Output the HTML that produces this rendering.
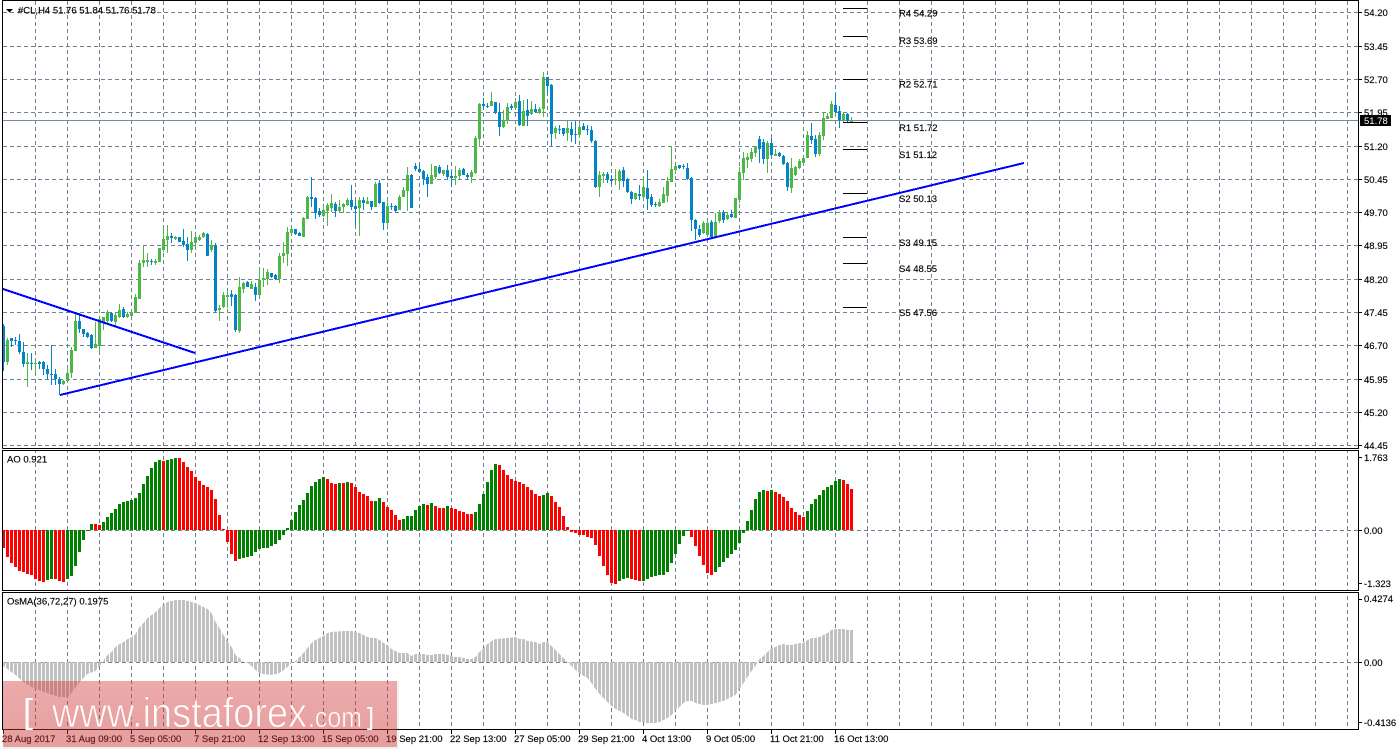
<!DOCTYPE html>
<html><head><meta charset="utf-8"><title>#CL,H4</title>
<style>
html,body{margin:0;padding:0;background:#fff;width:1398px;height:750px;overflow:hidden}
svg{display:block}
text{font-family:"Liberation Sans",sans-serif;font-size:9.5px;fill:#000;stroke:#000;stroke-width:.15px}
</style></head><body>
<svg width="1398" height="750" viewBox="0 0 1398 750" xmlns="http://www.w3.org/2000/svg">
<defs>
<pattern id="st" x="2" y="0" width="4" height="20" patternUnits="userSpaceOnUse"><rect width="3" height="20" fill="#c0c0c0"/></pattern>
<linearGradient id="wm" x1="0" y1="0" x2="0" y2="1"><stop offset="0" stop-color="#d53a3a" stop-opacity=".43"/><stop offset="1" stop-color="#c83030" stop-opacity=".47"/></linearGradient>
</defs>
<rect width="1398" height="750" fill="#fff"/>
<!-- vertical grid -->
<path fill="none" stroke="#708090" stroke-dasharray="4 3" d="M35.5 1V729M67.5 1V729M99.5 1V729M131.5 1V729M163.5 1V729M195.5 1V729M227.5 1V729M259.5 1V729M291.5 1V729M323.5 1V729M355.5 1V729M387.5 1V729M419.5 1V729M451.5 1V729M483.5 1V729M515.5 1V729M547.5 1V729M579.5 1V729M611.5 1V729M643.5 1V729M675.5 1V729M707.5 1V729M739.5 1V729M771.5 1V729M803.5 1V729M835.5 1V729M867.5 1V729M899.5 1V729M931.5 1V729M963.5 1V729M995.5 1V729M1027.5 1V729M1059.5 1V729M1091.5 1V729M1123.5 1V729M1155.5 1V729M1187.5 1V729M1219.5 1V729M1251.5 1V729M1283.5 1V729M1315.5 1V729M1347.5 1V729"/>
<rect x="3" y="449" width="1355" height="1" fill="#fff"/><rect x="3" y="591" width="1355" height="1" fill="#fff"/>
<!-- horizontal grid -->
<path fill="none" stroke="#708090" stroke-dasharray="4 3" d="M3 12.5H1358M3 46.5H1358M3 79.5H1358M3 112.5H1358M3 146.5H1358M3 179.5H1358M3 212.5H1358M3 245.5H1358M3 279.5H1358M3 312.5H1358M3 345.5H1358M3 379.5H1358M3 412.5H1358M3 445.5H1358M3 530.5H1358M3 662.5H1358"/>
<!-- AO -->
<path fill="none" stroke="#ff0000" stroke-width="3" d="M3.5 530V548M7.5 530V557M11.5 530V563M15.5 530V567M19.5 530V571M23.5 530V572M27.5 530V574M31.5 530V575M35.5 530V579M39.5 530V581M43.5 530V582M55.5 530V579M59.5 530V581M63.5 530V582M95.5 530V524M99.5 530V525M163.5 530V461M179.5 530V458M183.5 530V462M187.5 530V467M191.5 530V471M195.5 530V477M199.5 530V481M203.5 530V485M207.5 530V487M211.5 530V490M215.5 530V499M219.5 530V515M223.5 530V529M227.5 530V542M231.5 530V554M235.5 530V561M327.5 530V479M331.5 530V483M335.5 530V484M343.5 530V483M351.5 530V483M355.5 530V487M359.5 530V492M363.5 530V494M367.5 530V496M371.5 530V501M383.5 530V502M387.5 530V507M391.5 530V510M395.5 530V515M399.5 530V520M427.5 530V505M435.5 530V506M439.5 530V508M443.5 530V508M451.5 530V508M455.5 530V509M459.5 530V511M463.5 530V512M467.5 530V514M471.5 530V514M499.5 530V465M503.5 530V470M507.5 530V475M511.5 530V479M515.5 530V481M519.5 530V482M523.5 530V484M527.5 530V487M531.5 530V490M535.5 530V494M539.5 530V496M551.5 530V496M555.5 530V502M559.5 530V507M563.5 530V516M567.5 530V527M571.5 530V532M575.5 530V533M579.5 530V535M583.5 530V535M587.5 530V537M591.5 530V538M595.5 530V545M599.5 530V556M603.5 530V566M607.5 530V575M611.5 530V583M615.5 530V584M631.5 530V579M635.5 530V580M639.5 530V581M691.5 530V537M695.5 530V546M699.5 530V556M703.5 530V565M707.5 530V573M711.5 530V575M767.5 530V491M775.5 530V492M779.5 530V494M783.5 530V497M787.5 530V501M791.5 530V508M795.5 530V512M799.5 530V515M803.5 530V517M843.5 530V480M847.5 530V484M851.5 530V489"/>
<path fill="none" stroke="#008000" stroke-width="3" d="M47.5 530V580M51.5 530V579M67.5 530V579M71.5 530V576M75.5 530V566M79.5 530V552M83.5 530V540M87.5 530V531M91.5 530V524M103.5 530V522M107.5 530V517M111.5 530V513M115.5 530V509M119.5 530V504M123.5 530V502M127.5 530V501M131.5 530V500M135.5 530V498M139.5 530V493M143.5 530V484M147.5 530V476M151.5 530V468M155.5 530V462M159.5 530V460M167.5 530V460M171.5 530V459M175.5 530V458M239.5 530V559M243.5 530V558M247.5 530V557M251.5 530V556M255.5 530V552M259.5 530V549M263.5 530V548M267.5 530V548M271.5 530V546M275.5 530V544M279.5 530V540M283.5 530V535M287.5 530V528M291.5 530V520M295.5 530V512M299.5 530V505M303.5 530V500M307.5 530V493M311.5 530V486M315.5 530V482M319.5 530V479M323.5 530V477M339.5 530V483M347.5 530V482M375.5 530V501M379.5 530V498M403.5 530V519M407.5 530V516M411.5 530V516M415.5 530V510M419.5 530V506M423.5 530V504M431.5 530V503M447.5 530V506M475.5 530V512M479.5 530V504M483.5 530V494M487.5 530V482M491.5 530V470M495.5 530V464M543.5 530V495M547.5 530V493M619.5 530V581M623.5 530V579M627.5 530V578M643.5 530V581M647.5 530V579M651.5 530V577M655.5 530V576M659.5 530V575M663.5 530V575M667.5 530V572M671.5 530V563M675.5 530V554M679.5 530V544M683.5 530V536M687.5 530V531M715.5 530V572M719.5 530V567M723.5 530V562M727.5 530V558M731.5 530V554M735.5 530V550M739.5 530V543M743.5 530V533M747.5 530V521M751.5 530V510M755.5 530V499M759.5 530V492M763.5 530V490M771.5 530V490M807.5 530V511M811.5 530V504M815.5 530V499M819.5 530V495M823.5 530V490M827.5 530V487M831.5 530V485M835.5 530V481M839.5 530V479"/>
<!-- OsMA -->
<path fill="url(#st)" d="M2 662L3.5 666L11.5 672L15.5 675L23.5 682L31.5 687L43.5 692L59.5 697L67.5 697L71.5 693L79.5 682L87.5 674L95.5 671L99.5 666L103.5 662L103.5 660L107.5 655L111.5 652L115.5 647L119.5 644L123.5 642L127.5 639L131.5 637L135.5 634L139.5 627L143.5 623L147.5 618L151.5 615L155.5 612L159.5 608L163.5 605L167.5 602L171.5 601L175.5 600L183.5 600L187.5 601L191.5 602L195.5 603L199.5 605L203.5 607L207.5 609L211.5 613L215.5 622L219.5 628L223.5 635L227.5 641L231.5 647L235.5 655L239.5 658L243.5 662L247.5 663L251.5 666L255.5 670L259.5 673L263.5 674L271.5 675L279.5 673L283.5 670L287.5 667L291.5 663L295.5 661L299.5 657L303.5 653L307.5 648L311.5 643L315.5 640L319.5 638L323.5 636L327.5 633L331.5 632L343.5 631L351.5 631L355.5 632L359.5 633L363.5 635L367.5 637L371.5 638L375.5 638L379.5 640L383.5 643L387.5 645L391.5 649L395.5 651L399.5 653L407.5 653L411.5 656L415.5 654L423.5 654L427.5 655L431.5 655L435.5 654L443.5 654L447.5 655L451.5 656L455.5 657L459.5 657L463.5 658L467.5 659L471.5 659L475.5 657L479.5 652L483.5 648L487.5 644L491.5 641L495.5 639L507.5 638L515.5 637L519.5 639L523.5 639L527.5 641L535.5 642L539.5 644L543.5 642L547.5 642L551.5 646L555.5 650L559.5 654L563.5 658L567.5 662L571.5 666L575.5 670L579.5 673L583.5 676L587.5 678L591.5 683L595.5 689L599.5 694L603.5 698L607.5 702L611.5 706L615.5 709L619.5 711L623.5 713L627.5 716L631.5 719L635.5 720L639.5 722L647.5 723L655.5 723L659.5 722L663.5 720L667.5 718L671.5 715L675.5 710L679.5 707L683.5 703L687.5 701L691.5 701L695.5 703L699.5 704L703.5 705L707.5 705L711.5 704L715.5 703L719.5 702L723.5 701L727.5 699L731.5 697L735.5 695L739.5 689L743.5 683L747.5 677L751.5 671L755.5 666L759.5 659L763.5 656L767.5 652L771.5 648L775.5 647L779.5 645L783.5 644L787.5 645L791.5 645L795.5 644L799.5 643L803.5 643L807.5 640L811.5 638L815.5 638L819.5 637L823.5 635L827.5 633L831.5 630L835.5 629L843.5 629L847.5 630L853 630L853 662Z"/>
<!-- bid line -->
<rect x="3" y="120" width="1355" height="1" fill="#778899"/>
<!-- candles -->
<path fill="none" stroke="#0484c6" stroke-width="1" d="M3.5 324V371M11.5 338V347M15.5 337V345M19.5 334V354M23.5 342V367M31.5 353V370M39.5 361V369M43.5 361V375M47.5 365V380M51.5 345V385M55.5 369V385M59.5 377V395M79.5 313V333M83.5 329V337M87.5 332V338M91.5 334V349M111.5 312V322M123.5 307V318M151.5 259V265M171.5 233V243M179.5 237V242M183.5 229V247M187.5 237V261M207.5 233V256M215.5 243V313M231.5 290V306M235.5 294V332M247.5 281V287M255.5 283V301M271.5 273V278M275.5 274V280M295.5 229V235M299.5 232V236M311.5 177V207M315.5 197V219M319.5 208V217M335.5 202V217M351.5 185V210M355.5 200V225M363.5 197V210M371.5 201V210M379.5 180V204M383.5 202V230M391.5 203V210M395.5 205V213M411.5 174V208M415.5 163V171M419.5 164V173M423.5 170V185M427.5 174V197M439.5 165V174M447.5 165V179M451.5 171V187M463.5 168V175M467.5 173V180M483.5 98V108M487.5 103V108M495.5 102V114M499.5 103V136M511.5 104V110M519.5 95V126M527.5 99V126M535.5 104V113M547.5 77V94M551.5 84V146M559.5 125V134M563.5 128V136M571.5 122V142M575.5 121V144M583.5 123V130M587.5 125V135M591.5 126V143M595.5 140V188M607.5 172V183M611.5 175V184M623.5 167V187M627.5 178V193M631.5 191V204M639.5 185V200M647.5 170V210M651.5 194V207M655.5 202V207M679.5 165V169M683.5 164V169M687.5 163V180M691.5 177V231M695.5 219V240M699.5 225V237M711.5 220V238M723.5 210V223M731.5 210V218M759.5 136V163M763.5 139V164M771.5 138V156M779.5 152V157M783.5 155V165M787.5 162V191M811.5 123V144M815.5 135V157M835.5 93V113M839.5 106V128M847.5 113V122"/>
<path fill="none" stroke="#0484c6" stroke-width="3" d="M3.5 326V362M11.5 338V341M15.5 340V341M19.5 341V352M23.5 352V364M31.5 363V364M39.5 362V364M43.5 362V369M47.5 369V374M51.5 374V375M55.5 374V379M59.5 379V384M79.5 321V329M83.5 329V334M87.5 333V337M91.5 335V348M111.5 313V321M123.5 309V317M151.5 261V262M171.5 236V238M179.5 237V242M183.5 241V245M187.5 244V250M207.5 234V256M215.5 245V311M231.5 294V297M235.5 295V330M247.5 282V287M255.5 287V295M271.5 273V277M275.5 275V279M295.5 229V234M299.5 233V236M311.5 197V199M315.5 198V213M319.5 211V215M335.5 204V211M351.5 200V207M355.5 206V209M363.5 200V203M371.5 201V207M379.5 183V203M383.5 202V223M391.5 206V207M395.5 206V211M411.5 175V208M415.5 166V169M419.5 169V172M423.5 171V179M427.5 177V184M439.5 167V173M447.5 170V177M451.5 176V178M463.5 169V175M467.5 175V177M483.5 104V106M487.5 106V107M495.5 102V113M499.5 112V127M511.5 106V108M519.5 101V125M527.5 110V116M535.5 109V112M547.5 77V86M551.5 85V134M559.5 129V130M563.5 128V134M571.5 129V135M575.5 134V135M583.5 126V130M587.5 129V130M591.5 130V141M595.5 141V187M607.5 174V179M611.5 179V181M623.5 170V181M627.5 179V192M631.5 192V199M639.5 194V196M647.5 188V199M651.5 197V205M655.5 204V205M679.5 165V168M683.5 166V167M687.5 168V179M691.5 178V220M695.5 220V229M699.5 229V235M711.5 222V237M723.5 212V220M731.5 214V217M759.5 139V149M763.5 142V159M771.5 143V155M779.5 153V156M783.5 156V164M787.5 163V187M811.5 136V140M815.5 139V154M835.5 105V112M839.5 111V120M847.5 114V121"/>
<path fill="none" stroke="#4db848" stroke-width="1" d="M7.5 338V365M27.5 353V387M35.5 358V372M63.5 380V385M67.5 368V383M71.5 347V378M75.5 314V351M95.5 322V348M99.5 318V352M103.5 317V330M107.5 310V325M115.5 313V326M119.5 304V318M127.5 312V318M131.5 312V317M135.5 294V313M139.5 260V299M143.5 245V267M147.5 253V267M155.5 259V265M159.5 248V262M163.5 229V252M167.5 225V253M175.5 236V240M191.5 231V253M195.5 236V245M199.5 235V241M203.5 232V238M211.5 240V252M219.5 305V321M223.5 292V308M227.5 291V308M239.5 277V333M243.5 282V293M251.5 281V289M259.5 267V295M263.5 268V287M267.5 269V285M279.5 253V283M283.5 242V263M287.5 227V266M291.5 227V234M303.5 217V237M307.5 196V219M323.5 206V217M327.5 203V226M331.5 194V212M339.5 200V212M343.5 203V213M347.5 198V206M359.5 197V236M367.5 197V204M375.5 182V207M387.5 200V228M399.5 195V210M403.5 187V197M407.5 167V211M431.5 164V184M435.5 166V179M443.5 170V176M455.5 166V185M459.5 168V180M471.5 170V183M475.5 136V174M479.5 103V147M491.5 92V106M503.5 110V128M507.5 103V124M515.5 98V108M523.5 100V126M531.5 101V115M539.5 107V114M543.5 72V117M555.5 126V139M567.5 121V141M579.5 122V138M599.5 171V197M603.5 172V183M615.5 169V185M619.5 169V190M635.5 193V200M643.5 176V200M659.5 199V207M663.5 187V203M667.5 177V202M671.5 146V182M675.5 166V174M703.5 221V234M707.5 220V237M715.5 213V238M719.5 210V223M727.5 212V220M735.5 198V218M739.5 167V203M743.5 152V180M747.5 153V168M751.5 148V162M755.5 146V157M767.5 141V173M775.5 149V156M791.5 158V193M795.5 166V176M799.5 159V169M803.5 157V164M807.5 131V158M819.5 132V156M823.5 112V140M827.5 113V119M831.5 101V118M843.5 113V122M851.5 117V122"/>
<path fill="none" stroke="#4db848" stroke-width="3" d="M7.5 340V362M27.5 362V364M35.5 363V364M63.5 381V384M67.5 373V381M71.5 350V373M75.5 321V351M95.5 344V348M99.5 319V346M103.5 317V322M107.5 312V321M115.5 315V322M119.5 310V317M127.5 314V317M131.5 312V316M135.5 297V313M139.5 263V299M143.5 260V263M147.5 260V262M155.5 261V263M159.5 248V262M163.5 239V250M167.5 236V240M175.5 237V239M191.5 242V250M195.5 237V243M199.5 237V240M203.5 233V237M211.5 245V250M219.5 308V310M223.5 295V307M227.5 295V297M239.5 287V331M243.5 283V289M251.5 284V289M259.5 280V295M263.5 278V280M267.5 272V279M279.5 256V279M283.5 253V256M287.5 232V254M291.5 229V233M303.5 218V237M307.5 197V219M323.5 210V216M327.5 205V211M331.5 203V208M339.5 207V211M343.5 204V207M347.5 200V205M359.5 200V208M367.5 201V204M375.5 184V207M387.5 206V223M399.5 197V210M403.5 190V197M407.5 175V191M431.5 175V184M435.5 166V177M443.5 170V174M455.5 176V178M459.5 170V176M471.5 172V177M475.5 138V173M479.5 104V139M491.5 101V106M503.5 120V127M507.5 107V121M515.5 102V108M523.5 111V126M531.5 109V114M539.5 109V113M543.5 77V109M555.5 128V133M567.5 128V133M579.5 127V135M599.5 175V187M603.5 174V176M615.5 179V180M619.5 171V181M635.5 193V199M643.5 187V197M659.5 202V206M663.5 194V203M667.5 181V196M671.5 169V182M675.5 166V170M703.5 223V233M707.5 223V235M715.5 222V237M719.5 212V221M727.5 215V219M735.5 198V218M739.5 172V200M743.5 158V173M747.5 157V160M751.5 152V159M755.5 146V153M767.5 143V159M775.5 154V156M791.5 168V188M795.5 167V175M799.5 161V168M803.5 158V163M807.5 135V158M819.5 135V154M823.5 118V136M827.5 116V119M831.5 104V118M843.5 114V120M851.5 121V122"/>
<!-- pivots -->
<path fill="none" stroke="#000" d="M843 8.5H867M843 36.5H867M843 79.5H867M843 122.5H867M843 149.5H867M843 193.5H867M843 237.5H867M843 263.5H867M843 307.5H867"/>
<!-- trend lines -->
<g fill="none" stroke="#0000ff" stroke-width="2" shape-rendering="crispEdges"><path d="M3 289L195 353"/><path d="M60 395L1024 163"/></g>
<text x="899" y="16.5">R4 54.29</text><text x="899" y="44">R3 53.69</text><text x="899" y="87.5">R2 52.71</text><text x="899" y="131">R1 51.72</text><text x="899" y="158">S1 51.12</text><text x="899" y="202">S2 50.13</text><text x="899" y="246">S3 49.15</text><text x="899" y="272">S4 48.55</text><text x="899" y="316">S5 47.56</text>
<!-- frames -->
<g fill="none" stroke="#000"><path d="M2.5 0V448.5M1358.5 0V449M2.5 0.5H1358.5M2.5 448.5H1358.5"/><path d="M2.5 450.5H1358.5V590.5H2.5ZM2.5 592.5H1358.5V729.5H2.5Z"/>
<path d="M1358 12.5h4M1358 46.5h4M1358 79.5h4M1358 112.5h4M1358 146.5h4M1358 179.5h4M1358 212.5h4M1358 245.5h4M1358 279.5h4M1358 312.5h4M1358 345.5h4M1358 379.5h4M1358 412.5h4M1358 445.5h4M1358 457.5h4M1358 530.5h4M1358 583.5h4M1358 599.5h4M1358 662.5h4M1358 722.5h4"/>
<path d="M3.5 729V734M67.5 729V734M131.5 729V734M195.5 729V734M259.5 729V734M323.5 729V734M387.5 729V734M451.5 729V734M515.5 729V734M579.5 729V734M643.5 729V734M707.5 729V734M771.5 729V734M835.5 729V734"/></g>
<path d="M6 9H13L9.5 12.5Z" fill="#000"/>
<text x="18" y="13.5">#CL,H4  51.76 51.84 51.76 51.78</text>
<text x="7" y="462.5">AO 0.921</text>
<text x="7" y="604.5">OsMA(36,72,27) 0.1975</text>
<!-- axis labels -->
<text x="1364" y="16">54.20</text><text x="1364" y="50">53.45</text><text x="1364" y="83">52.70</text><text x="1364" y="116">51.95</text><text x="1364" y="150">51.20</text><text x="1364" y="183">50.45</text><text x="1364" y="216">49.70</text><text x="1364" y="249">48.95</text><text x="1364" y="283">48.20</text><text x="1364" y="316">47.45</text><text x="1364" y="349">46.70</text><text x="1364" y="383">45.95</text><text x="1364" y="416">45.20</text><text x="1364" y="449">44.45</text>
<rect x="1360" y="115" width="31" height="11" fill="#000"/><text x="1364" y="124" style="fill:#fff;stroke:none">51.78</text>
<text x="1364" y="461">1.763</text><text x="1364" y="534">0.00</text><text x="1364" y="587">-1.323</text>
<text x="1364" y="602">0.4274</text><text x="1364" y="666">0.00</text><text x="1364" y="726">-0.4136</text>
<text x="2" y="742">28 Aug 2017</text><text x="66" y="742">31 Aug 09:00</text><text x="130" y="742">5 Sep 05:00</text><text x="194" y="742">7 Sep 21:00</text><text x="258" y="742">12 Sep 13:00</text><text x="322" y="742">15 Sep 05:00</text><text x="386" y="742">19 Sep 21:00</text><text x="450" y="742">22 Sep 13:00</text><text x="514" y="742">27 Sep 05:00</text><text x="578" y="742">29 Sep 21:00</text><text x="642" y="742">4 Oct 13:00</text><text x="706" y="742">9 Oct 05:00</text><text x="770" y="742">11 Oct 21:00</text><text x="834" y="742">16 Oct 13:00</text>
<!-- watermark -->
<rect x="397" y="681" width="2" height="67" fill="#000" fill-opacity=".05"/>
<rect x="3" y="747" width="396" height="2" fill="#000" fill-opacity=".05"/>
<rect x="3" y="681" width="394" height="66" fill="url(#wm)"/>
<text x="23" y="723" style="fill:#fff;stroke:none;font-size:34px" textLength="10" lengthAdjust="spacingAndGlyphs">[</text>
<text x="52" y="727" style="fill:#fff;stroke:#e9a3a3;stroke-width:.9px;font-size:42px" textLength="255" lengthAdjust="spacingAndGlyphs">www.instaforex</text>
<text x="308" y="727" style="fill:#fff;stroke:#e9a3a3;stroke-width:.6px;font-size:29px" textLength="54" lengthAdjust="spacingAndGlyphs">.com</text>
<text x="367" y="725" style="fill:#fff;stroke:none;font-size:25px" textLength="7" lengthAdjust="spacingAndGlyphs">]</text>
</svg>
</body></html>
